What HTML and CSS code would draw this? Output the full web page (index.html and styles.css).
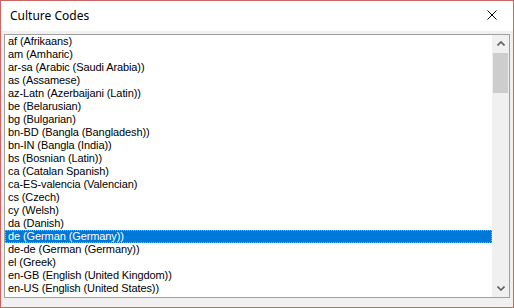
FILE: index.html
```html
<!DOCTYPE html>
<html lang="en">
<head>
  <meta charset="UTF-8" />
  <title>Culture Codes</title>
  <link rel="stylesheet" href="styles.css">
</head>
<body>
  <div class="window">
    <div class="title-bar">
      <span class="title">Culture Codes</span>
      <button class="close-btn" aria-label="Close">
        <svg width="10" height="10" viewBox="0 0 10 10">
          <path d="M0.5 0.5 L9.5 9.5 M9.5 0.5 L0.5 9.5" stroke="#000" stroke-width="1" fill="none"/>
        </svg>
      </button>
    </div>

    <div class="content">
      <div class="listbox">
        <ul class="items">
          <li>af (Afrikaans)</li>
          <li>am (Amharic)</li>
          <li>ar-sa (Arabic (Saudi Arabia))</li>
          <li>as (Assamese)</li>
          <li>az-Latn (Azerbaijani (Latin))</li>
          <li>be (Belarusian)</li>
          <li>bg (Bulgarian)</li>
          <li>bn-BD (Bangla (Bangladesh))</li>
          <li>bn-IN (Bangla (India))</li>
          <li>bs (Bosnian (Latin))</li>
          <li>ca (Catalan Spanish)</li>
          <li>ca-ES-valencia (Valencian)</li>
          <li>cs (Czech)</li>
          <li>cy (Welsh)</li>
          <li>da (Danish)</li>
          <li class="selected">de (German (Germany))</li>
          <li>de-de (German (Germany))</li>
          <li>el (Greek)</li>
          <li>en-GB (English (United Kingdom))</li>
          <li>en-US (English (United States))</li>
        </ul>

        <!-- barra de desplazamiento -->
        <div class="scrollbar">
          <div class="scroll-btn">
            <svg width="8" height="5" viewBox="0 0 8 5">
              <path d="M0.5 4.5 L4 1 L7.5 4.5" stroke="#606060" stroke-width="1.6" fill="none"/>
            </svg>
          </div>
          <div class="track">
            <div class="thumb"></div>
          </div>
          <div class="scroll-btn">
            <svg width="8" height="5" viewBox="0 0 8 5">
              <path d="M0.5 0.5 L4 4 L7.5 0.5" stroke="#606060" stroke-width="1.6" fill="none"/>
            </svg>
          </div>
        </div>
      </div>
    </div>
  </div>
</body>
</html>
```

FILE: styles.css
```css
* {
  box-sizing: border-box;
}

body {
  margin: 0;
  background-color: #fff;
}

.window {
  width: 514px;
  height: 308px;
  border: 1px solid #cc6464;
  display: flex;
  flex-direction: column;
  background-color: #f0f0f0;
  overflow: hidden;
}

.title-bar {
  height: 30px;
  flex-shrink: 0;
  background-color: #fff;
  display: flex;
  align-items: center;
  justify-content: space-between;
  padding-left: 9px;
}

.title {
  font-family: "Noto Sans", "Open Sans", sans-serif;
  font-size: 12px;
  color: #000;
  margin-top: -1px;
}

.close-btn {
  width: 46px;
  height: 30px;
  border: none;
  background: transparent;
  display: flex;
  align-items: center;
  justify-content: center;
  padding: 0 0 0 3px;
  margin-top: -2px;
}

.content {
  flex: 1;
  min-height: 0;
  padding: 3px 3px 9px 3px;
  display: flex;
}

.listbox {
  flex: 1;
  min-height: 0;
  border: 1px solid #a0a0a0;
  background-color: #fff;
  display: flex;
  overflow: hidden;
}

.items {
  flex: 1;
  list-style: none;
  margin: 0;
  padding: 0;
  overflow: hidden;
  font-family: "Liberation Sans", Arial, sans-serif;
  font-size: 11px;
  letter-spacing: -0.1px;
  color: #000;
}

.items li {
  height: 13px;
  line-height: 13px;
  padding-left: 3px;
  white-space: nowrap;
}

.items li.selected {
  background-color: #0078d7;
  color: #fff;
  outline: 1px dotted #f7a040;
  outline-offset: -1px;
}

.scrollbar {
  width: 17px;
  background-color: #f0f0f0;
  display: flex;
  flex-direction: column;
}

.scroll-btn {
  height: 17px;
  display: flex;
  align-items: center;
  justify-content: center;
}

.track {
  flex: 1;
  padding: 1px 1px 0 1px;
}

.thumb {
  height: 40px;
  background-color: #cdcdcd;
}
```
